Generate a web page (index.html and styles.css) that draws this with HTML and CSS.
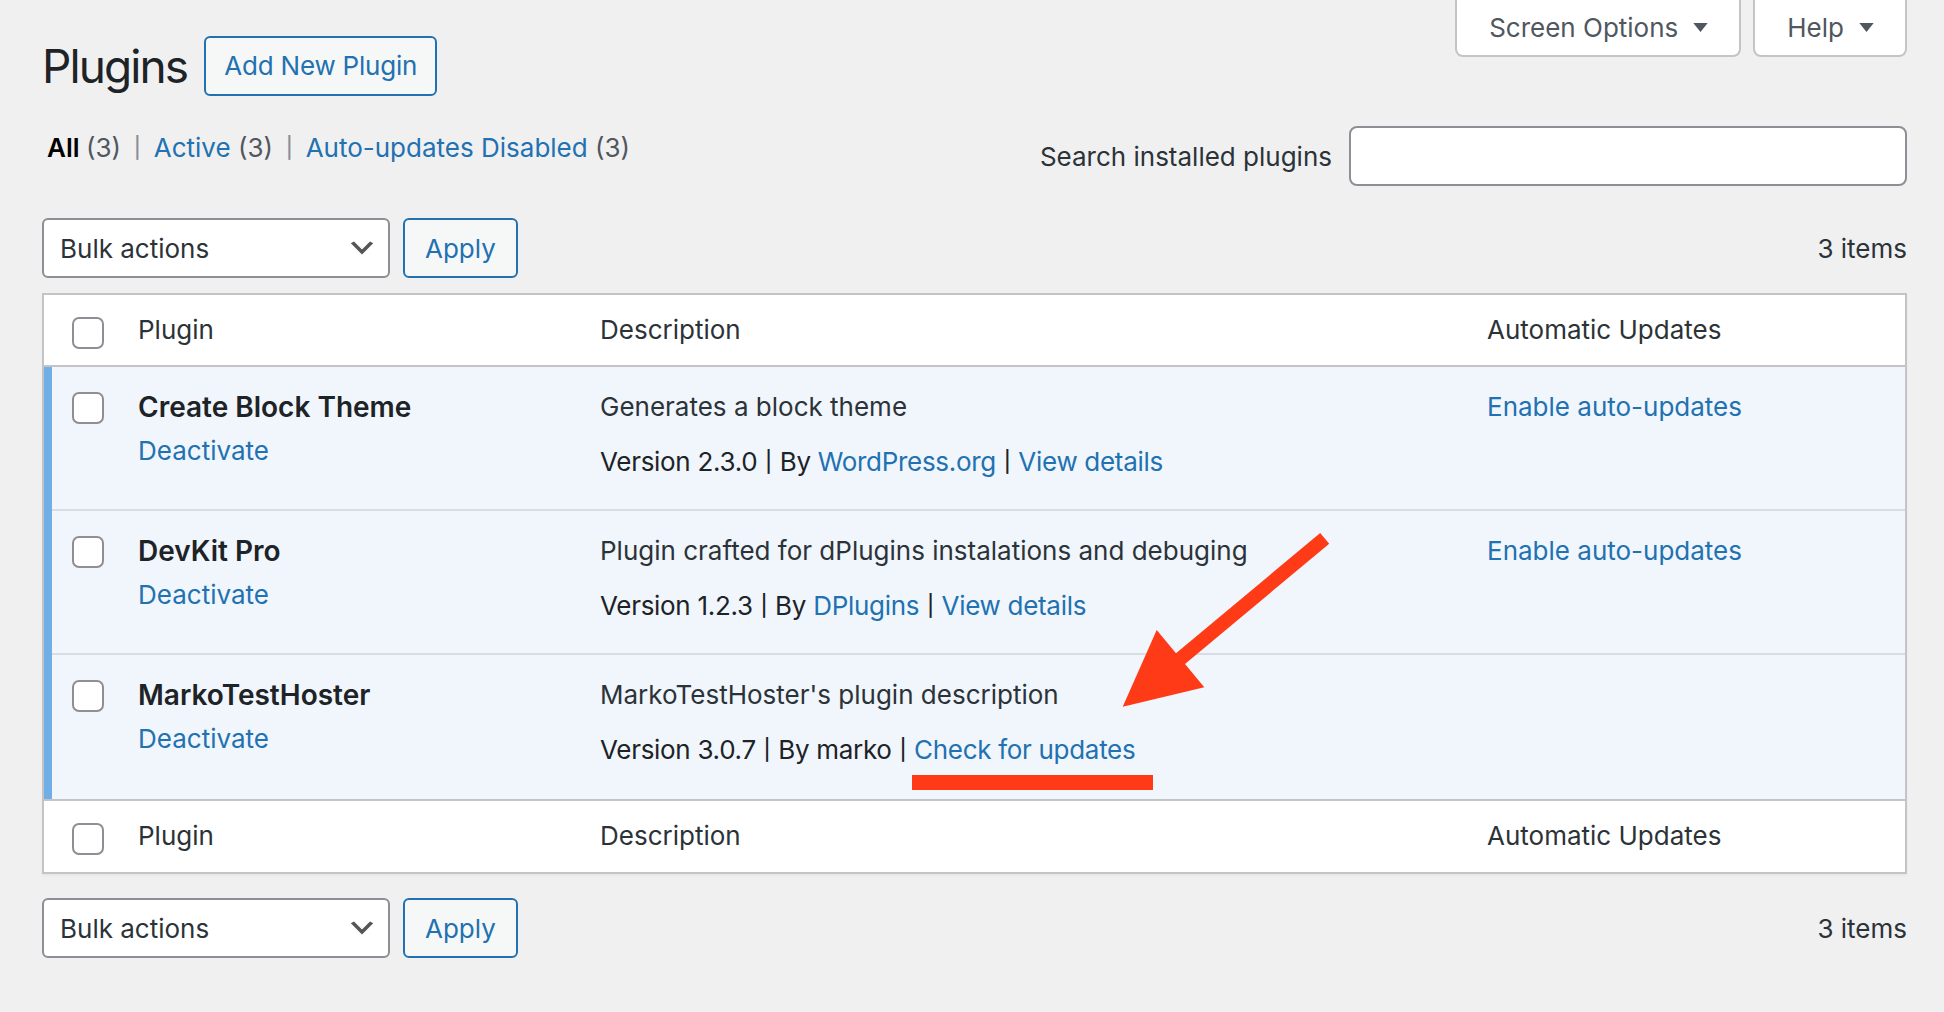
FILE: index.html
```html
<!DOCTYPE html>
<html lang="en">
<head>
<meta charset="utf-8">
<title>Plugins</title>
<link rel="stylesheet" href="styles.css">
</head>
<body>
<div class="wrap">
  <header class="page-head">
    <div class="title-row">
      <h1>Plugins</h1>
      <a class="page-title-action" href="#">Add New Plugin</a>
    </div>
    <nav class="screen-meta-links">
      <button class="meta-tab" type="button">Screen Options <svg class="tri" viewBox="0 0 16 10" width="15" height="9"><polygon points="0,0 16,0 8,10"/></svg></button>
      <button class="meta-tab" type="button">Help <svg class="tri" viewBox="0 0 16 10" width="15" height="9"><polygon points="0,0 16,0 8,10"/></svg></button>
    </nav>
  </header>

  <div class="filter-row">
    <ul class="subsubsub">
      <li><a class="current" href="#">All <span class="count">(3)</span></a><span class="sep">|</span></li>
      <li><a href="#">Active <span class="count">(3)</span></a><span class="sep">|</span></li>
      <li><a href="#">Auto-updates Disabled <span class="count">(3)</span></a></li>
    </ul>
    <div class="search-box">
      <label for="plugin-search">Search installed plugins</label>
      <input id="plugin-search" class="search-input" type="search">
    </div>
  </div>

  <div class="tablenav">
    <div class="actions">
      <div class="select">Bulk actions <svg class="chev" viewBox="0 0 20 20" width="32" height="32"><path d="M5 6l5 5 5-5 2 1-7 7-7-7 2-1z"/></svg></div>
      <button class="button" type="button">Apply</button>
    </div>
    <span class="displaying-num">3 items</span>
  </div>

  <table class="plugins">
    <colgroup>
      <col class="c-check"><col class="c-name"><col class="c-desc"><col class="c-auto">
    </colgroup>
    <thead>
      <tr>
        <th class="check-column"><input class="cb" type="checkbox"></th>
        <th>Plugin</th>
        <th>Description</th>
        <th>Automatic Updates</th>
      </tr>
    </thead>
    <tbody>
      <tr>
        <th class="check-column"><input class="cb" type="checkbox"></th>
        <td class="plugin-title">
          <strong>Create Block Theme</strong>
          <div class="row-actions"><a href="#">Deactivate</a></div>
        </td>
        <td class="desc">
          <p>Generates a block theme</p>
          <div class="version">Version 2.3.0 <span class="pipe">|</span> By <a href="#">WordPress.org</a> <span class="pipe">|</span> <a href="#">View details</a></div>
        </td>
        <td class="auto"><a href="#">Enable auto-updates</a></td>
      </tr>
      <tr>
        <th class="check-column"><input class="cb" type="checkbox"></th>
        <td class="plugin-title">
          <strong>DevKit Pro</strong>
          <div class="row-actions"><a href="#">Deactivate</a></div>
        </td>
        <td class="desc">
          <p>Plugin crafted for dPlugins instalations and debuging</p>
          <div class="version">Version 1.2.3 <span class="pipe">|</span> By <a href="#">DPlugins</a> <span class="pipe">|</span> <a href="#">View details</a></div>
        </td>
        <td class="auto"><a href="#">Enable auto-updates</a></td>
      </tr>
      <tr>
        <th class="check-column"><input class="cb" type="checkbox"></th>
        <td class="plugin-title">
          <strong>MarkoTestHoster</strong>
          <div class="row-actions"><a href="#">Deactivate</a></div>
        </td>
        <td class="desc">
          <p>MarkoTestHoster's plugin description</p>
          <div class="version">Version 3.0.7 <span class="pipe">|</span> By marko <span class="pipe">|</span> <a class="marked" href="#">Check for updates</a></div>
        </td>
        <td class="auto"></td>
      </tr>
    </tbody>
    <tfoot>
      <tr>
        <th class="check-column"><input class="cb" type="checkbox"></th>
        <th>Plugin</th>
        <th>Description</th>
        <th>Automatic Updates</th>
      </tr>
    </tfoot>
  </table>

  <div class="tablenav bottom">
    <div class="actions">
      <div class="select">Bulk actions <svg class="chev" viewBox="0 0 20 20" width="32" height="32"><path d="M5 6l5 5 5-5 2 1-7 7-7-7 2-1z"/></svg></div>
      <button class="button" type="button">Apply</button>
    </div>
    <span class="displaying-num">3 items</span>
  </div>
</div>

<svg class="annotation" viewBox="0 0 1944 1012" width="1944" height="1012" aria-hidden="true">
  <polygon points="1320.2,532.9 1329.2,543.7 1185,663.9 1204.3,687.3 1122.7,706.7 1156.7,630 1176,653.3"/>
</svg>
</body>
</html>
```

FILE: styles.css
```css
* { box-sizing: border-box; }

html, body {
  margin: 0;
  padding: 0;
}

body {
  position: relative;
  min-height: 1012px;
  background: #f0f0f1;
  color: #1d2327;
  font-family: Inter, "Noto Sans", "Liberation Sans", sans-serif;
  font-size: 26px;
  line-height: 39px;
}

a {
  color: #2271b1;
  text-decoration: none;
}

.wrap {
  padding: 0 37px 0 42px;
}

/* ---------- head ---------- */
.page-head {
  display: flex;
  justify-content: space-between;
  align-items: flex-start;
}

.title-row {
  display: flex;
  align-items: center;
  gap: 17px;
  margin-top: 36px;
}

h1 {
  margin: 0;
  font-size: 46px;
  font-weight: 400;
  line-height: 60px;
  letter-spacing: -1.9px;
  color: #1d2327;
}

.page-title-action {
  display: inline-block;
  height: 60px;
  line-height: 56px;
  padding: 0 18px;
  border: 2px solid #2271b1;
  border-radius: 6px;
  background: #f6f7f7;
  color: #2271b1;
  letter-spacing: -0.2px;
}

.screen-meta-links {
  display: flex;
  gap: 12px;
}

.meta-tab {
  display: flex;
  align-items: center;
  gap: 15px;
  height: 57px;
  padding: 0 31px 0 32px;
  background: #fff;
  border: 2px solid #c3c4c7;
  border-top: 0;
  border-radius: 0 0 8px 8px;
  color: #50575e;
  font: inherit;
  line-height: 55px;
}

.tri { fill: #50575e; }

/* ---------- filters + search ---------- */
.filter-row {
  display: flex;
  justify-content: space-between;
  align-items: flex-start;
}

.subsubsub {
  display: flex;
  margin: 26px 0 0;
  padding: 0;
  list-style: none;
  line-height: 52px;
  color: #50575e;
}

.subsubsub li {
  display: flex;
  white-space: nowrap;
}

.subsubsub a {
  padding: 0 5px;
}

.subsubsub a.current {
  color: #000;
  font-weight: 600;
}

.subsubsub .count {
  color: #50575e;
  font-weight: 400;
}

.subsubsub .sep {
  margin: 0 7px;
  color: #8c8f94;
  transform: scaleY(.8);
}

.search-box {
  display: flex;
  align-items: center;
  gap: 17px;
  margin-top: 30px;
  color: #2c3338;
}

.search-input {
  width: 558px;
  height: 60px;
  margin: 0;
  padding: 0 16px;
  border: 2px solid #8c8f94;
  border-radius: 8px;
  background: #fff;
  font: inherit;
}

/* ---------- tablenav ---------- */
.tablenav {
  display: flex;
  align-items: center;
  justify-content: space-between;
  margin: 32px 0 15px;
}

.tablenav.bottom {
  margin: 24px 0 0;
}

.actions {
  display: flex;
  gap: 13px;
}

.select {
  display: flex;
  align-items: center;
  justify-content: space-between;
  width: 348px;
  height: 60px;
  padding: 0 10px 0 16px;
  border: 2px solid #8c8f94;
  border-radius: 6px;
  background: #fff;
  color: #2c3338;
}

.chev { fill: #555; }

.button {
  display: flex;
  align-items: center;
  height: 60px;
  padding: 0 20px;
  border: 2px solid #2271b1;
  border-radius: 6px;
  background: #f6f7f7;
  color: #2271b1;
  font: inherit;
}

.displaying-num {
  color: #2c3338;
}

/* ---------- table ---------- */
.plugins {
  width: 100%;
  table-layout: fixed;
  border: 2px solid #c3c4c7;
  border-collapse: separate;
  border-spacing: 0;
  background: #fff;
  box-shadow: 0 2px 2px rgba(0, 0, 0, .04);
}

.c-check { width: 74px; }
.c-name { width: 462px; }
.c-desc { width: 887px; }
.c-auto { width: 438px; }

.plugins thead th,
.plugins tfoot th {
  padding: 15px 20px 16px;
  text-align: left;
  font-weight: 400;
  color: #2c3338;
  line-height: 39px;
  vertical-align: top;
}

.plugins thead th {
  border-bottom: 2px solid #c3c4c7;
}

.plugins tfoot th {
  padding-bottom: 17px;
  border-top: 2px solid #c3c4c7;
}

.plugins thead th.check-column,
.plugins tfoot th.check-column {
  padding: 22px 0 0 28px;
}

.cb {
  display: block;
  width: 32px;
  height: 32px;
  margin: 0;
  appearance: none;
  -webkit-appearance: none;
  border: 2px solid #8c8f94;
  border-radius: 7px;
  background: #fff;
}

.plugins tbody td,
.plugins tbody th {
  padding: 20px 20px 14px;
  vertical-align: top;
  text-align: left;
  background: #f0f6fc;
  box-shadow: inset 0 -2px 0 rgba(0, 0, 0, .1);
}

.plugins tbody th.check-column {
  padding: 25px 0 0 28px;
  box-shadow: inset 8px 0 0 #72aee6, inset 0 -2px 0 rgba(0, 0, 0, .1);
}

.plugins tbody tr:last-child td {
  box-shadow: none;
}

.plugins tbody tr:last-child th.check-column {
  box-shadow: inset 8px 0 0 #72aee6;
}

.plugin-title strong {
  display: block;
  font-size: 28px;
  font-weight: 600;
  line-height: 40px;
  color: #1d2327;
}

.row-actions {
  padding-top: 4px;
  line-height: 39px;
}

.desc p {
  margin: 0 0 16px;
  color: #2c3338;
}

.version {
  margin: 0 0 16px;
  color: #1d2327;
  letter-spacing: -0.3px;
}

.pipe {
  display: inline-block;
  transform: scaleY(.8);
}

.marked {
  position: relative;
}

.marked::after {
  content: "";
  position: absolute;
  left: -2px;
  right: -18px;
  top: 41px;
  height: 15px;
  background: #ff3a16;
}

/* ---------- annotation ---------- */
.annotation {
  position: absolute;
  left: 0;
  top: 0;
  pointer-events: none;
  fill: #ff3a16;
}
```
